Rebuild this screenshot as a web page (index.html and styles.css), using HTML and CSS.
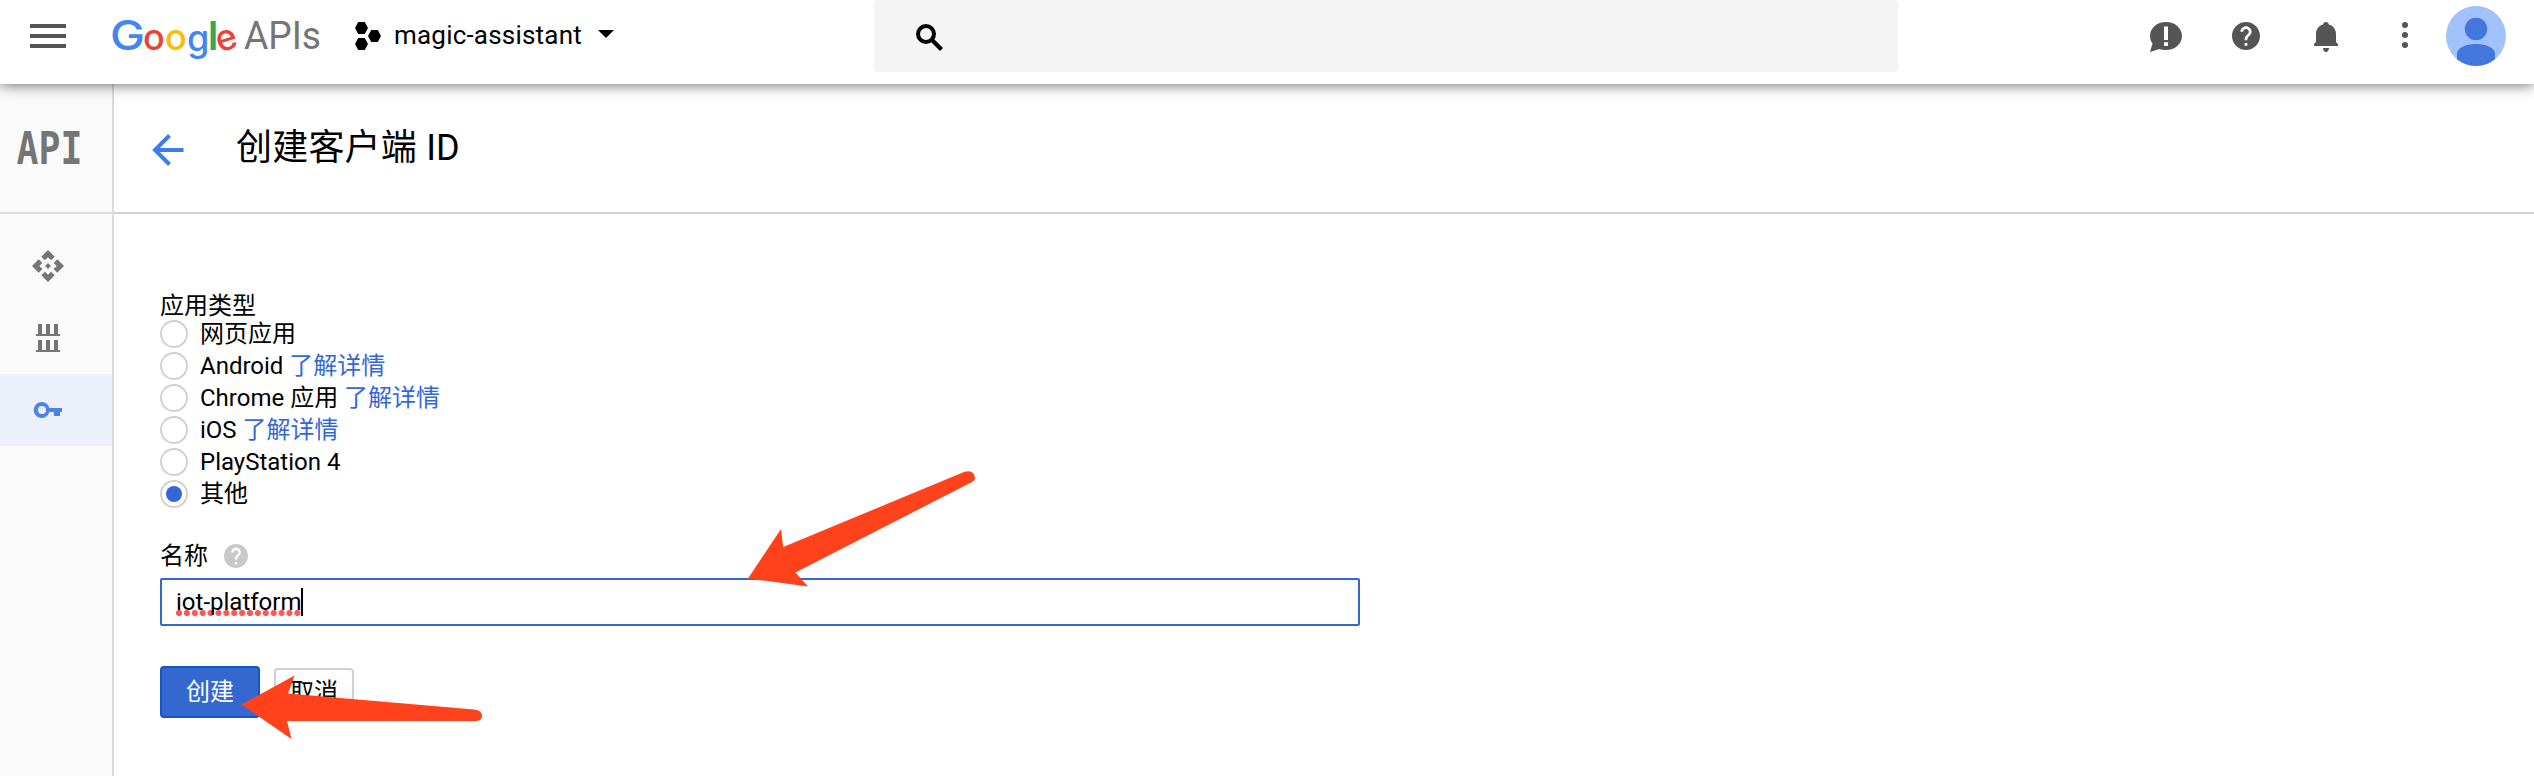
FILE: index.html
```html
<!DOCTYPE html>
<html lang="zh-CN">
<head>
<meta charset="utf-8">
<title>创建客户端 ID</title>
<link rel="stylesheet" href="styles.css">
</head>
<body>
<header class="topbar">
  <svg class="menu" width="36" height="24" viewBox="0 0 36 24" fill="#555"><path d="M0 0h36v4H0zM0 10h36v4H0zM0 20h36v4H0z"/></svg>
  <svg class="logo" width="216" height="84" viewBox="0 0 216 84">
    <g class="logo-google">
      <text class="logo-cap" x="-2" y="50" fill="#4285f4" textLength="35" lengthAdjust="spacingAndGlyphs">G</text>
      <text x="31" y="50" fill="#ea4335">o</text>
      <text x="53" y="50" fill="#fbbc05">o</text>
      <text x="75" y="51" fill="#4285f4">g</text>
      <text class="logo-l" x="96" y="50" fill="#34a853">l</text>
      <text x="103.800" y="50" fill="#ea4335" transform="rotate(-18 114.500 40)">e</text>
    </g>
    <text class="logo-apis" x="132" y="49" textLength="77" lengthAdjust="spacingAndGlyphs">APIs</text>
  </svg>
  <div class="project">
    <svg width="26" height="28" viewBox="0 0 26 28"><path d="M3.2 0h6.6l3.2 6-3.2 6H3.2L0 6zM3.2 16h6.6l3.2 6-3.2 6H3.2L0 22zM16.2 8h6.6l3.2 6-3.2 6h-6.6L13 14z"/></svg>
    <span class="project-name">magic-assistant</span>
    <svg class="caret" width="16" height="8" viewBox="0 0 16 8"><path d="M0 0h16L8 8z"/></svg>
  </div>
  <div class="search">
    <svg width="28" height="28" viewBox="0 0 28 28" fill="none" stroke="#000"><circle cx="10" cy="10" r="8" stroke-width="4"/><path d="M15.5 15.5 25.5 25.5" stroke-width="4.2"/></svg>
  </div>
  <div class="actions">
    <svg width="32" height="30" viewBox="0 0 32 30"><path fill="#555" d="M16 0c9 0 16 6.200 16 14s-7 14-16 14c-2.500 0-4.500-.3-6.500-1L0 30l2.500-8.500C.8 19.200 0 16.800 0 14 0 6.200 7 0 16 0z"/><path d="M14 4.500h4V18h-4zM14 20.200h4V24h-4z" fill="#fff"/></svg>
    <svg width="28" height="28" viewBox="2 2 20 20"><path fill="#555" d="M12 2C6.480 2 2 6.480 2 12s4.480 10 10 10 10-4.480 10-10S17.520 2 12 2zm1 17h-2v-2h2v2zm2.070-7.750l-.9.92C13.450 12.900 13 13.500 13 15h-2v-.5c0-1.100.45-2.100 1.170-2.830l1.240-1.260c.37-.36.59-.86.59-1.410 0-1.100-.9-2-2-2s-2 .9-2 2H8c0-2.210 1.790-4 4-4s4 1.790 4 4c0 .88-.36 1.680-.93 2.250z"/></svg>
    <svg class="bell" width="24" height="30" viewBox="0 0 24 30" fill="#555"><path d="M12 0c1.700 0 2.700 1 2.800 2.400C19.200 3.700 22 7.200 22 12v8l2 2v2H0v-2l2-2v-8c0-4.800 2.800-8.300 7.200-9.600C9.300 1 10.300 0 12 0zM9 26h6c0 2.200-1.200 4-3 4s-3-1.800-3-4z"/></svg>
    <svg width="6" height="26" viewBox="0 0 6 26" fill="#555"><circle cx="3" cy="3" r="3"/><circle cx="3" cy="13" r="3"/><circle cx="3" cy="23" r="3"/></svg>
    <svg class="avatar" width="60" height="60" viewBox="0 0 60 60"><circle cx="30" cy="30" r="30" fill="#a1c2fa"/><circle cx="30" cy="23" r="11.200" fill="#4477dd"/><path d="M11 53.200V48c0-6 8.500-10 19-10s19 4 19 10v5.200A30 30 0 0 1 11 53.200z" fill="#4477dd"/></svg>
  </div>
</header>
<div class="body">
  <nav class="sidebar">
    <div class="side-head">
      <svg width="64" height="34" viewBox="0 0 64 34"><g transform="scale(1 1.2)"><text class="api-mark" x="-1.5" y="27.300">API</text></g></svg>
    </div>
    <div class="side-items">
      <a class="side-item"><svg width="32" height="32" viewBox="1 1 22 22" fill="#757575"><path d="M14 12l-2 2-2-2 2-2 2 2zM12 6l2.120 2.120 2.500-2.500L12 1 7.380 5.620l2.500 2.500L12 6zM6 12l2.120-2.120-2.500-2.500L1 12l4.620 4.620 2.500-2.500L6 12zM18 12l-2.120 2.120 2.500 2.500L23 12l-4.620-4.620-2.500 2.500L18 12zM12 18l-2.120-2.120-2.500 2.500L12 23l4.620-4.620-2.500-2.500L12 18z"/></svg></a>
      <a class="side-item"><svg width="24" height="28" viewBox="0 0 24 28" fill="#757575"><path d="M2 0h4v10h4V0h4v10h4V0h4v10h2v2H0v-2h2zM2 16h4v10h4V16h4v10h4V16h4v10h2v2H0v-2h2z"/></svg></a>
      <a class="side-item active"><svg width="28" height="16" viewBox="0 0 28 16" fill="#4d84ea"><path fill-rule="evenodd" d="M8 0a8 8 0 0 1 7.400 6H28v4h-2v4h-6v-4h-4.600A8 8 0 1 1 8 0zm0 4a4 4 0 1 0 0 8 4 4 0 0 0 0-8z"/></svg></a>
    </div>
  </nav>
  <main class="main">
    <div class="page-head">
      <svg width="32" height="32" viewBox="0 0 32 32" fill="none" stroke="#3f7de8" stroke-width="4"><path d="M31.500 16H3M17.500 1.500 3 16l14.500 14.500"/></svg>
      <h1 class="title">创建客户端 ID</h1>
    </div>
    <form class="form">
      <div class="label">应用类型</div>
      <div class="options">
        <label class="option"><i class="radio"></i><span>网页应用</span></label>
        <label class="option"><i class="radio"></i><span>Android <a>了解详情</a></span></label>
        <label class="option"><i class="radio"></i><span>Chrome 应用 <a>了解详情</a></span></label>
        <label class="option"><i class="radio"></i><span>iOS <a>了解详情</a></span></label>
        <label class="option"><i class="radio"></i><span>PlayStation 4</span></label>
        <label class="option"><i class="radio checked"></i><span>其他</span></label>
      </div>
      <div class="name-label"><span>名称</span>
        <svg width="24" height="24" viewBox="2 2 20 20"><path fill="#c9c9c9" d="M12 2C6.480 2 2 6.480 2 12s4.480 10 10 10 10-4.480 10-10S17.520 2 12 2zm1 17h-2v-2h2v2zm2.070-7.750l-.9.920C13.450 12.900 13 13.500 13 15h-2v-.5c0-1.100.45-2.100 1.170-2.830l1.240-1.260c.37-.36.59-.86.59-1.410 0-1.100-.9-2-2-2s-2 .9-2 2H8c0-2.210 1.790-4 4-4s4 1.790 4 4c0 .88-.36 1.680-.93 2.250z"/></svg>
      </div>
      <div class="field"><span class="misspelled">iot-platform</span><i class="cursor"></i></div>
      <div class="buttons"><span class="btn primary">创建</span><span class="btn">取消</span></div>
    </form>
  </main>
</div>
<svg class="arrows" width="2534" height="776" viewBox="0 0 2534 776" fill="#ff421c">
  <path d="M748 578.500 781 529l2.200 18L964 472q10-3 11 6 .2 2-3 4L795.500 572.500 808 586.500z"/>
  <path d="M241.500 704.500 294.500 675.500 288 693.500 474 709.500q8 1 8 6 0 5-6 5.500H287l4.500 18z"/>
</svg>
</body>
</html>
```
FILE: styles.css
```css
* { box-sizing: border-box; }
body { margin: 0; height: 776px; overflow: hidden; background: #fff; color: #000; font: 24px/32px Roboto, "Noto Sans CJK SC", sans-serif; }
svg { display: block; flex: none; overflow: visible; }
.topbar { position: relative; z-index: 1; display: flex; height: 84px; background: #fff; box-shadow: 0 0 14px rgba(0,0,0,.65); }
.menu { margin: 24px 0 0 30px; }
.logo { margin-left: 46px; }
.logo-google { font: 500 36px Inter, sans-serif; }
.logo-cap { font-size: 41px; }
.logo-l { font-size: 39px; font-weight: 600; }
.logo-apis { font: 39px Roboto, sans-serif; fill: #757575; }
.project { display: flex; align-items: flex-start; margin-left: 27px; width: 519px; padding-top: 22px; }
.project-name { margin-left: 13px; font-size: 26px; line-height: 27px; letter-spacing: .2px; }
.caret { margin: 8px 0 0 16px; }
.search { width: 1024px; height: 72px; padding: 24px 0 0 42px; background: #f4f4f4; border-radius: 4px; }
.actions { display: flex; align-items: flex-start; padding-top: 22px; margin-left: 252px; }
.actions svg + svg { margin-left: 50px; }
.actions svg.bell { margin-left: 54px; }
.actions svg.bell + svg { margin-left: 64px; }
.actions svg.avatar { margin: -16px 0 0 38px; }
.body { display: flex; height: 692px; }
.sidebar { width: 114px; background: #fafafa; border-right: 2px solid #dcdcdc; }
.side-head { height: 130px; padding: 47px 0 0 18px; border-bottom: 2px solid #dcdcdc; }
.api-mark { font: bold 36.500px "DejaVu Sans Mono", monospace; fill: #757575; }
.side-items { padding-top: 16px; }
.side-item { display: flex; align-items: center; justify-content: center; height: 72px; padding-right: 16px; }
.side-item.active { background: #ebf0fa; }
.main { flex: 1; }
.page-head { display: flex; align-items: flex-start; height: 130px; padding: 50px 0 0 38px; border-bottom: 2px solid #d3d3d3; }
.title { margin: -11px 0 0 52px; font-size: 36px; line-height: 50px; font-weight: 400; letter-spacing: .2px; }
.form { padding: 76px 0 0 46px; }
.label { height: 28px; }
.option { display: flex; align-items: center; height: 32px; }
.option a { color: #3367d6; }
.radio { display: flex; align-items: center; justify-content: center; width: 28px; height: 28px; margin-right: 12px; border: 2px solid #d2d2d2; border-radius: 50%; }
.radio.checked::after { content: ""; width: 16px; height: 16px; border-radius: 50%; background: #3367d6; }
.name-label { display: flex; align-items: center; gap: 16px; margin-top: 30px; height: 32px; }
.field { display: flex; align-items: center; width: 1200px; height: 48px; margin-top: 6px; padding-left: 14px; border: 2px solid #3367d6; border-radius: 2px; }
.misspelled { background: radial-gradient(circle at 3px 3px, #f55 2.700px, transparent 3.400px) 0 24px / 7.900px 6px repeat-x; }
.cursor { width: 2px; height: 28px; margin-left: 0; background: #000; }
.buttons { display: flex; align-items: center; gap: 14px; margin-top: 40px; }
.btn { display: flex; align-items: center; justify-content: center; width: 80px; height: 48px; border: 2px solid #d0d0d0; border-radius: 4px; background: linear-gradient(#fff, #f8f8f8); }
.btn.primary { width: 100px; height: 52px; color: #fff; border-color: #1655c6; background: #3568cf; }
.arrows { position: absolute; left: 0; top: 0; z-index: 2; }
```
